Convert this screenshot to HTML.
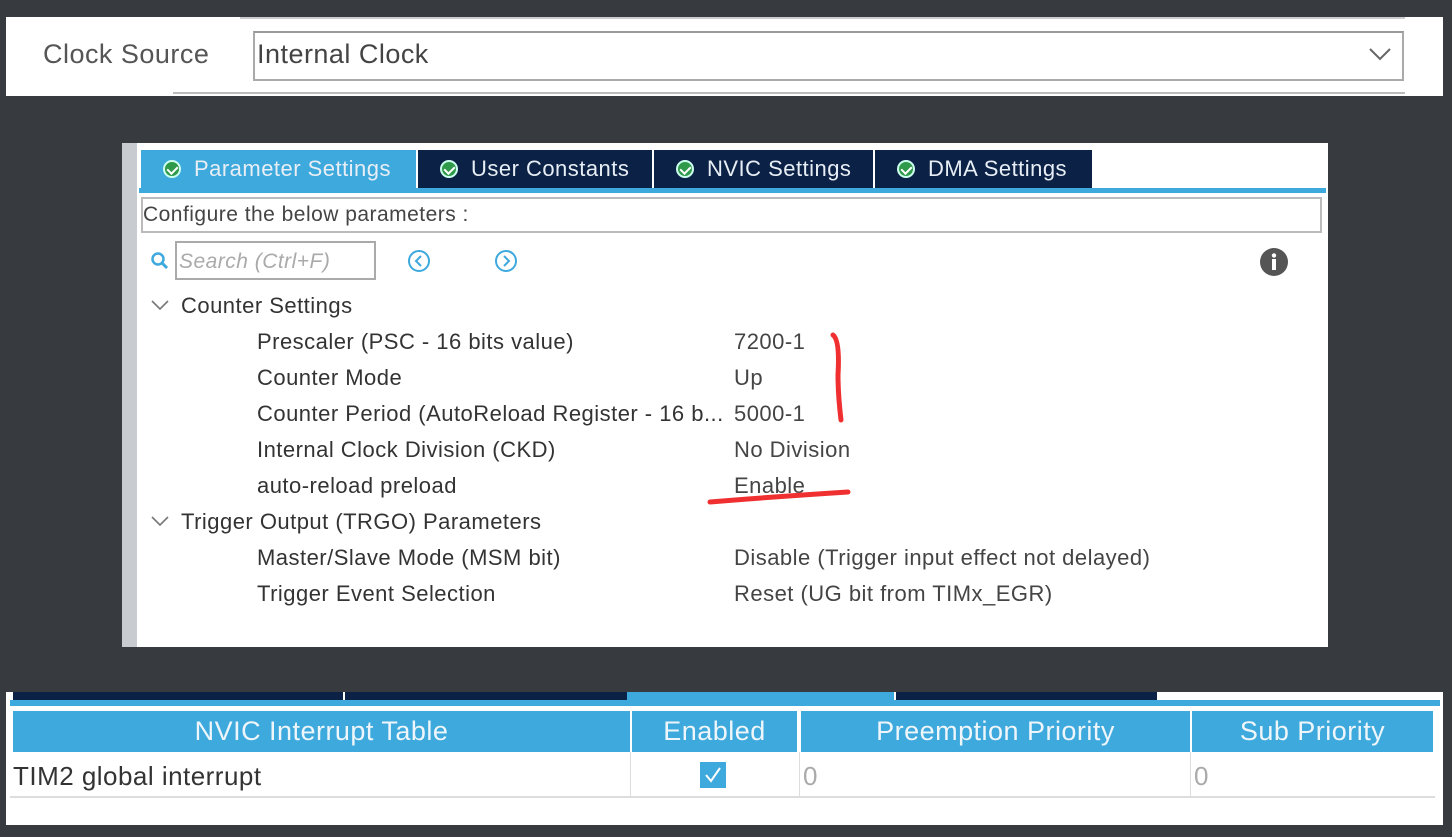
<!DOCTYPE html>
<html><head><meta charset="utf-8"><style>
*{margin:0;padding:0;box-sizing:border-box}
body{width:1452px;height:837px;background:#373b3f;position:relative;overflow:hidden;font-family:"Liberation Sans",sans-serif;color:#333;letter-spacing:0.03em}
.a{position:absolute;white-space:nowrap}
.tab{position:absolute;top:150px;height:38px;background:#0b2246;color:#e8eef5;font-size:22px;line-height:38px;padding-left:53px}
.tab .c{position:absolute;left:22px;top:10px;width:18px;height:18px;border-radius:50%;background:#2f9a4a;border:2px solid #cfe;}
.tab .c:after{content:"";position:absolute;left:4px;top:2px;width:5px;height:8px;border:solid #fff;border-width:0 2px 2px 0;transform:rotate(45deg)}
.row{position:absolute;font-size:22px;color:#333;white-space:nowrap}
.th{position:absolute;top:711px;height:41px;background:#3ea9dc;color:#eef6fb;font-size:27px;line-height:41px;text-align:center}
</style></head><body>
<div class="a" style="left:6px;top:17px;width:1437px;height:79px;background:#fff"></div>
<div class="a" style="left:240px;top:17px;width:1165px;height:2px;background:#ccc"></div>
<div class="a" style="left:43px;top:39px;font-size:27px;color:#555">Clock Source</div>
<div class="a" style="left:253px;top:31px;width:1151px;height:50px;border:2px solid #aaa;border-top-color:#999"></div>
<div class="a" style="left:257px;top:39px;font-size:27px;color:#444">Internal Clock</div>
<svg class="a" style="left:1368px;top:46px" width="24" height="16"><path d="M2 3 L12 13 L22 3" stroke="#666" stroke-width="2" fill="none"/></svg>
<div class="a" style="left:173px;top:92px;width:1232px;height:4px;border-top:2px solid #bbb"></div>

<div class="a" style="left:122px;top:143px;width:1206px;height:504px;background:#fff"></div>
<div class="a" style="left:122px;top:143px;width:15px;height:504px;background:#c8ccd0"></div>
<div class="tab" style="left:141px;width:275px;background:#3ea9dc"><span class="c"></span>Parameter Settings</div>
<div class="tab" style="left:418px;width:234px"><span class="c"></span>User Constants</div>
<div class="tab" style="left:654px;width:219px"><span class="c"></span>NVIC Settings</div>
<div class="tab" style="left:875px;width:217px"><span class="c"></span>DMA Settings</div>
<div class="a" style="left:139px;top:188px;width:1187px;height:5px;background:#3ea9dc"></div>
<div class="a" style="left:141px;top:197px;width:1181px;height:36px;border:2px solid #bbb"></div>
<div class="a" style="left:143px;top:203px;font-size:21px;color:#444">Configure the below parameters :</div>
<svg class="a" style="left:150px;top:251px" width="20" height="20"><circle cx="8" cy="8" r="5.5" stroke="#3ea9dc" stroke-width="2.5" fill="none"/><path d="M12 12 L17 17" stroke="#3ea9dc" stroke-width="3"/></svg>
<div class="a" style="left:175px;top:241px;width:201px;height:39px;border:2px solid #aaa"></div>
<div class="a" style="left:179px;top:250px;font-size:21px;color:#aaa;font-style:italic">Search (Ctrl+F)</div>
<svg class="a" style="left:407px;top:249px" width="24" height="24"><circle cx="12" cy="12" r="10" stroke="#3ea9dc" stroke-width="2" fill="none"/><path d="M14 7 L9 12 L14 17" stroke="#3ea9dc" stroke-width="2" fill="none"/></svg>
<svg class="a" style="left:494px;top:249px" width="24" height="24"><circle cx="12" cy="12" r="10" stroke="#3ea9dc" stroke-width="2" fill="none"/><path d="M10 7 L15 12 L10 17" stroke="#3ea9dc" stroke-width="2" fill="none"/></svg>
<svg class="a" style="left:1259px;top:247px" width="30" height="30"><circle cx="15" cy="15" r="14" fill="#555"/><circle cx="15" cy="8.5" r="2.2" fill="#fff"/><rect x="13" y="12" width="4" height="11" fill="#fff"/></svg>

<svg class="a" style="left:150px;top:298px" width="20" height="14"><path d="M2 3 L10 11 L18 3" stroke="#777" stroke-width="1.6" fill="none"/></svg>
<div class="row" style="left:181px;top:293px">Counter Settings</div>
<div class="row" style="left:257px;top:329px">Prescaler (PSC - 16 bits value)</div>
<div class="row" style="left:734px;top:329px;color:#444">7200-1</div>
<div class="row" style="left:257px;top:365px">Counter Mode</div>
<div class="row" style="left:734px;top:365px;color:#444">Up</div>
<div class="row" style="left:257px;top:401px">Counter Period (AutoReload Register - 16 b...</div>
<div class="row" style="left:734px;top:401px;color:#444">5000-1</div>
<div class="row" style="left:257px;top:437px">Internal Clock Division (CKD)</div>
<div class="row" style="left:734px;top:437px;color:#444">No Division</div>
<div class="row" style="left:257px;top:473px">auto-reload preload</div>
<div class="row" style="left:734px;top:473px;color:#444">Enable</div>
<svg class="a" style="left:150px;top:514px" width="20" height="14"><path d="M2 3 L10 11 L18 3" stroke="#777" stroke-width="1.6" fill="none"/></svg>
<div class="row" style="left:181px;top:509px">Trigger Output (TRGO) Parameters</div>
<div class="row" style="left:257px;top:545px">Master/Slave Mode (MSM bit)</div>
<div class="row" style="left:734px;top:545px;color:#444">Disable (Trigger input effect not delayed)</div>
<div class="row" style="left:257px;top:581px">Trigger Event Selection</div>
<div class="row" style="left:734px;top:581px;color:#444">Reset (UG bit from TIMx_EGR)</div>

<svg class="a" style="left:700px;top:325px" width="160" height="190"><path d="M133 10 Q140 15 138 50 Q138 70 141 95" stroke="#f03030" stroke-width="5" fill="none" stroke-linecap="round"/><path d="M10 177 Q70 172 148 167" stroke="#f03030" stroke-width="5" fill="none" stroke-linecap="round"/></svg>

<div class="a" style="left:6px;top:692px;width:1437px;height:133px;background:#fff"></div>
<div class="a" style="left:13px;top:692px;width:330px;height:8px;background:#0b2246"></div>
<div class="a" style="left:345px;top:692px;width:282px;height:8px;background:#0b2246"></div>
<div class="a" style="left:627px;top:692px;width:267px;height:8px;background:#3ea9dc"></div>
<div class="a" style="left:896px;top:692px;width:261px;height:8px;background:#0b2246"></div>
<div class="a" style="left:10px;top:700px;width:1430px;height:6px;background:#3ea9dc"></div>
<div class="th" style="left:13px;width:617px">NVIC Interrupt Table</div>
<div class="th" style="left:632px;width:165px">Enabled</div>
<div class="th" style="left:801px;width:389px">Preemption Priority</div>
<div class="th" style="left:1192px;width:241px">Sub Priority</div>
<div class="a" style="left:10px;top:752px;width:1425px;height:46px;border-bottom:2px solid #ddd"></div>
<div class="a" style="left:630px;top:752px;width:1px;height:46px;background:#ddd"></div>
<div class="a" style="left:799px;top:752px;width:1px;height:46px;background:#ddd"></div>
<div class="a" style="left:1190px;top:752px;width:1px;height:46px;background:#ddd"></div>
<div class="a" style="left:13px;top:761px;font-size:26px;color:#333">TIM2 global interrupt</div>
<svg class="a" style="left:700px;top:762px" width="26" height="26"><rect width="26" height="26" fill="#3ea9dc"/><path d="M6 13 L11 19 L20 6" stroke="#fff" stroke-width="2" fill="none"/></svg>
<div class="a" style="left:803px;top:761px;font-size:26px;color:#aaa">0</div>
<div class="a" style="left:1194px;top:761px;font-size:26px;color:#aaa">0</div>
</body></html>
